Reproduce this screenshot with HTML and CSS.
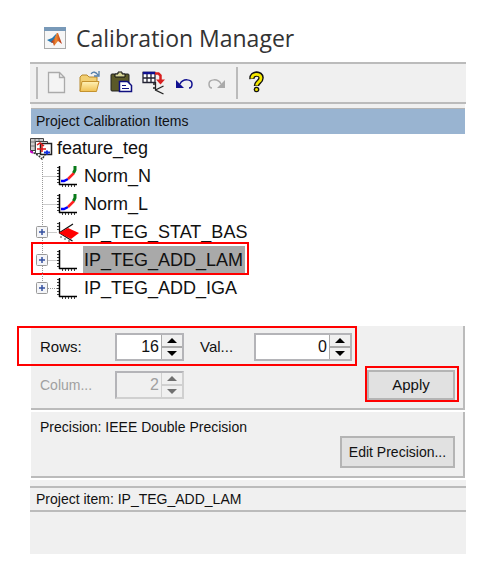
FILE: index.html
```html
<!DOCTYPE html>
<html lang="en">
<head>
<meta charset="utf-8">
<meta name="viewport" content="width=device-width, initial-scale=1">
<title>Calibration Manager</title>
<link rel="stylesheet" href="styles.css">
</head>
<body>
<svg class="defs" width="0" height="0" aria-hidden="true">
  <defs>
    <linearGradient id="folder" x2="0" y2="1"><stop offset="0" stop-color="#fff2b8"/><stop offset="1" stop-color="#f0c050"/></linearGradient>
    <linearGradient id="flame" x2="1"><stop offset="0" stop-color="#a02010"/><stop offset=".45" stop-color="#f08a30"/><stop offset="1" stop-color="#b02812"/></linearGradient>
    <g id="axes" stroke="#000" fill="none">
      <path d="M29.500 4V23M29 22.500H47" stroke-width="1.500"/>
      <path d="M27 5.500h2M27 8.500h2M27 11.500h2M27 14.500h2M27 17.500h2M27 20.500h2M32.500 23v2M35.500 23v2M38.500 23v2M41.500 23v2M44.500 23v2" stroke-opacity=".75"/>
    </g>
    <g id="curve" fill="none" stroke-width="2.500">
      <path d="M31 19h3l4-2" stroke="#00f"/>
      <path d="M38 17l6-6" stroke="#f22"/>
      <path d="M43.500 11L45 8V4" stroke="#087a18" stroke-width="3"/>
    </g>
    <g id="expander">
      <rect x="6.500" y="8.500" width="11" height="11" rx="1" fill="#f4f5f8" stroke="#999"/>
      <path d="M9 14h6M12 11v6" stroke="#3450a0" stroke-width="1.500"/>
    </g>
    <path id="branch" d="M12.500 0V28M12.500 14.500H27" fill="none" stroke="#999" stroke-dasharray="1 1"/>
    <path id="branch-end" d="M12.500 0V14.500H27" fill="none" stroke="#999" stroke-dasharray="1 1"/>
  </defs>
</svg>

<header class="title">
  <svg width="22" height="22" viewBox="0 0 22 22" aria-hidden="true">
    <rect x=".5" y=".5" width="21" height="21" fill="#f6f6f6" stroke="#aaa"/>
    <path d="M0 0h22v4H0z" fill="#7899b8"/>
    <path d="M3 13l5-2 3-3 2-2-3 9-2 1z" fill="#2878b0"/>
    <path d="M7 15l3-3 3-6 1 0 4 11-4-3-4 5-1-3z" fill="url(#flame)"/>
  </svg>
  <h1>Calibration Manager</h1>
</header>

<main>
  <div class="toolbar" role="toolbar" aria-label="Tools">
    <span class="grip"></span>
    <button aria-label="New"><svg width="24" height="24" viewBox="0 0 24 24"><path d="M2.500 1.500h11l5 5v15h-16zM13.500 1.500v5h5" fill="#f4f4f4" stroke="#aaa" stroke-width="1.300"/></svg></button>
    <button aria-label="Open"><svg width="24" height="24" viewBox="0 0 24 24"><path d="M2 20V6l2-2h5l2 2h8v4" fill="#f2cf72" stroke="#b98a2c"/><path d="M2 20.500l2-10h17l-2.500 10z" fill="url(#folder)" stroke="#c4922e"/><path d="M13 3c2-3 5-2 7 1M21 0v5h-5" fill="none" stroke="#527da8" stroke-width="1.300"/></svg></button>
    <button aria-label="Paste"><svg width="24" height="24" viewBox="0 0 24 24"><rect x="1" y="3" width="18" height="17" rx="1" fill="#5b5928" stroke="#222"/><path d="M5 6V3h3V1h4v2h3v3z" fill="#d9d79a" stroke="#111"/><path d="M9.500 10.500h8l4 4v6h-12z" fill="#fff" stroke="#101080" stroke-width="1.500"/><path d="M12 14.500h4M12 17.500h7" stroke="#101080"/></svg></button>
    <button aria-label="Convert table"><svg width="24" height="24" viewBox="0 0 24 24"><path d="M1 1.500h12v10H1zM1 7h12M5 2v10M9 2v10" fill="#fff" stroke="#223" stroke-width="1.300"/><path d="M1 2h12" stroke="#101090" stroke-width="2.500"/><path d="M13 2.500h3.500l2 2v5" fill="none" stroke="#d82020" stroke-width="2.500"/><path d="M14 8.500h9l-4.500 5z" fill="#d82020"/><path d="M13.500 11v8l8 4M13.500 19l8-4M11 13h3M11 17h3" fill="none" stroke="#222" stroke-width="1.300"/></svg></button>
    <button aria-label="Undo"><svg width="24" height="24" viewBox="0 0 24 24"><path d="M2 9v8h8z" fill="#101090"/><path d="M6 13c3-6 12-5 12 0 0 2-1 4-3 4" fill="none" stroke="#101090" stroke-width="1.500"/></svg></button>
    <button aria-label="Redo" disabled><svg width="24" height="24" viewBox="0 0 24 24"><path d="M19 9v8h-8z" fill="#aaa"/><path d="M15 13C12 7 3 8 3 13c0 2 1 4 3 4" fill="none" stroke="#aaa" stroke-width="1.500"/></svg></button>
    <span class="divider"></span>
    <button aria-label="Help"><svg width="24" height="24" viewBox="0 0 24 24"><path d="M6 8C5.500 1.500 15.500 1.500 15 7c0 4-4.500 4-4.500 8" fill="none" stroke="#111" stroke-width="5.500"/><circle cx="10.500" cy="18.500" r="2.800" fill="#111"/><path d="M6 7.500C5.500 2 15 2 15 7c0 4-4.500 4-4.500 7.500" fill="none" stroke="#f5e800" stroke-width="2.800"/><circle cx="10.500" cy="18.500" r="1.500" fill="#f5e800"/></svg></button>
  </div>

  <h2 class="tree-title">Project Calibration Items</h2>
  <ul class="tree">
    <li>
      <div class="root">
        <svg width="24" height="28" viewBox="0 0 24 28" aria-hidden="true">
          <path d="M.500 4.500h13v12H.500z" fill="#ccc" stroke="#444"/><path d="M1 8h13M1 12h13M5 5v11M9 5v11" stroke="#777"/>
          <path d="M1 17l8 5 3 3 3-4" fill="none" stroke="#333" stroke-width="1.500" stroke-dasharray="2 1"/><path d="M0 17l3 2" stroke="#c0c" stroke-width="2"/>
          <path d="M5.500 7.500h12v12h-12z" fill="#fff" stroke="#444"/><path d="M10.500 9.500h11v11h-11z" fill="#fff" stroke="#222" stroke-width="1.500"/>
          <path d="M7 11l3-2 4 3M7 15h9M12 10v8" fill="none" stroke="#e01818" stroke-width="1.500"/><path d="M14 18.500h6M17 16.500v4" stroke="#1030e0" stroke-width="2"/>
        </svg>
        <span>feature_teg</span>
      </div>
      <ul>
        <li><svg width="53" height="28" viewBox="0 0 53 28" aria-hidden="true"><use href="#branch"/><use href="#axes"/><use href="#curve"/></svg><span>Norm_N</span></li>
        <li><svg width="53" height="28" viewBox="0 0 53 28" aria-hidden="true"><use href="#branch"/><use href="#axes"/><use href="#curve"/></svg><span>Norm_L</span></li>
        <li><svg width="53" height="28" viewBox="0 0 53 28" aria-hidden="true"><use href="#branch"/><use href="#expander"/><path d="M29.500 4v11l13 8M29 15l14-9" fill="none" stroke="#111" stroke-width="1.300"/><path d="M27 5.500h2M27 8.500h2M27 11.500h2M31 18v2M35 20v2M39 22v2" stroke="#444"/><path d="M29 15l9-5 11 5-8 6z" fill="red"/></svg><span>IP_TEG_STAT_BAS</span></li>
        <li class="marked selected" aria-current="true"><svg width="53" height="28" viewBox="0 0 53 28" aria-hidden="true"><use href="#branch"/><use href="#expander"/><use href="#axes"/></svg><span>IP_TEG_ADD_LAM</span></li>
        <li><svg width="53" height="28" viewBox="0 0 53 28" aria-hidden="true"><use href="#branch-end"/><use href="#expander"/><use href="#axes"/></svg><span>IP_TEG_ADD_IGA</span></li>
      </ul>
    </li>
  </ul>

  <form class="details">
    <section class="panel size">
      <div class="fields marked">
        <label for="rows">Rows:</label>
        <div class="spinner">
          <input id="rows" type="text" inputmode="numeric" value="16">
          <div class="steps"><button type="button" aria-label="More rows"><svg width="12" height="6" viewBox="0 0 12 6"><path d="M0 6l6-6 6 6z"/></svg></button><button type="button" aria-label="Fewer rows"><svg width="12" height="6" viewBox="0 0 12 6"><path d="M0 0l6 6 6-6z"/></svg></button></div>
        </div>
        <label class="value-label" for="value">Val...</label>
        <div class="spinner wide">
          <input id="value" type="text" inputmode="numeric" value="0">
          <div class="steps"><button type="button" aria-label="Raise value"><svg width="12" height="6" viewBox="0 0 12 6"><path d="M0 6l6-6 6 6z"/></svg></button><button type="button" aria-label="Lower value"><svg width="12" height="6" viewBox="0 0 12 6"><path d="M0 0l6 6 6-6z"/></svg></button></div>
        </div>
      </div>
      <div class="second-row">
        <div class="fields off">
          <label for="columns">Colum...</label>
          <div class="spinner">
            <input id="columns" type="text" inputmode="numeric" value="2" disabled>
            <div class="steps"><button type="button" disabled aria-label="More columns"><svg width="12" height="6" viewBox="0 0 12 6"><path d="M0 6l6-6 6 6z"/></svg></button><button type="button" disabled aria-label="Fewer columns"><svg width="12" height="6" viewBox="0 0 12 6"><path d="M0 0l6 6 6-6z"/></svg></button></div>
          </div>
        </div>
        <button type="button" class="button apply marked">Apply</button>
      </div>
    </section>
    <section class="panel precision">
      <p>Precision: IEEE Double Precision</p>
      <button type="button" class="button">Edit Precision...</button>
    </section>
  </form>

  <footer>
    <p>Project item: IP_TEG_ADD_LAM</p>
  </footer>
</main>
</body>
</html>
```
FILE: styles.css
```css
* { box-sizing: border-box; }

body {
  margin: 0;
  padding: 20px 26px 20px 30px;
  background: #fff;
  color: #111;
  font: 14px/18px "Liberation Sans", Arial, sans-serif;
}

h1, h2, p, ul { margin: 0; padding: 0; font-weight: normal; }
ul { list-style: none; }
button, input { font: inherit; color: inherit; margin: 0; }
svg { display: block; flex: none; }
.defs { position: absolute; }

.title {
  display: flex;
  align-items: center;
  gap: 10px;
  height: 42px;
  padding: 0 14px 6px;
}
.title h1 {
  color: #333;
  font: 23px/36px "Open Sans", "Noto Sans", sans-serif;
}

/* Toolbar */
.toolbar {
  display: flex;
  align-items: center;
  gap: 8px;
  height: 42px;
  padding: 0 6px;
  border-top: 2px solid #bbb;
  border-bottom: 2px solid #bbb;
  background: #f0f0f0;
}
.toolbar button { padding: 0; border: 0; background: none; }
.grip, .divider { width: 2px; height: 32px; background: #bbb; }
.divider { margin-left: -2px; }

/* Tree */
.tree-title {
  margin: 4px 1px 0 1px;
  padding: 4px 5px;
  border-top: 1px solid #b4b4b4;
  background: #99b4d1;
  box-shadow: 0 -4px #f0f0f0;
  font-size: 14px;
  line-height: 17px;
}
.tree { padding-bottom: 24px; font-size: 18px; line-height: 28px; }
.tree li li, .root { display: flex; position: relative; width: fit-content; }
.root { gap: 3px; }
.tree li li span { padding: 0 2px 0 1px; }
.selected span { background: #a9a9a9; }

/* Red call-out frames drawn over the marked parts */
.marked { position: relative; }
.marked::after {
  content: "";
  position: absolute;
  border: 2px solid #f00;
  pointer-events: none;
}
.selected::after { inset: -4px -4px -1px 1px; }
.fields.marked::after { inset: -7px -5px -5px -23px; }
.apply.marked::after { inset: -6px -6px -4px -4px; }

/* Details */
.panel {
  margin: 0 1px 2px;
  padding: 7px 8px 7px 9px;
  border-right: 2px solid #bbb;
  border-bottom: 2px solid #bbb;
  background: #f0f0f0;
}
.fields { display: flex; align-items: center; width: fit-content; }
.fields label { width: 75px; font-size: 15px; }
.fields .value-label { width: 54px; margin-left: 16px; }
.second-row { display: flex; justify-content: space-between; margin-top: 9px; }
.off { color: #a0a0a0; }
.fields.off label { font-size: 14px; }

.spinner {
  display: flex;
  width: 69px;
  height: 28px;
  border: 2px solid #b4b4b8;
  background: #fff;
}
.wide { width: 98px; }
.spinner input {
  flex: 1;
  min-width: 0;
  padding: 0 2px;
  border: 0;
  background: none;
  font-size: 16px;
  text-align: right;
}
.steps {
  display: grid;
  grid-template-rows: 1fr 1fr;
  gap: 2px;
  width: 21px;
  border-left: 1px solid #aaa;
  background: #aaa;
}
.steps button {
  display: grid;
  place-items: center;
  min-height: 0;
  padding: 0;
  border: 0;
  background: #f0f0f0;
}
.steps svg { width: 10px; height: 5px; }
.off .spinner { background: #f0f0f0; border-color: #b4b4b8 #d0d0d0 #d0d0d0 #b4b4b8; }
.off .steps { background: #d0d0d0; border-color: #d0d0d0; }
.off .steps svg { fill: #707070; }

.button {
  height: 32px;
  padding: 0 5px;
  border: 2px solid #b4b4b4;
  background: #e1e1e1;
}
.apply { width: 88px; height: 30px; font-size: 15px; }

.size { height: 84px; }
.precision { display: flex; justify-content: space-between; height: 66px; padding-top: 6px; padding-bottom: 8px; }
.precision .button { align-self: flex-end; min-width: 115px; }

footer {
  height: 74px;
  padding-top: 6px;
  background: #f0f0f0;
}
footer p {
  padding: 2px 6px;
  border-top: 2px solid #bbb;
  border-bottom: 2px solid #bbb;
}
```
